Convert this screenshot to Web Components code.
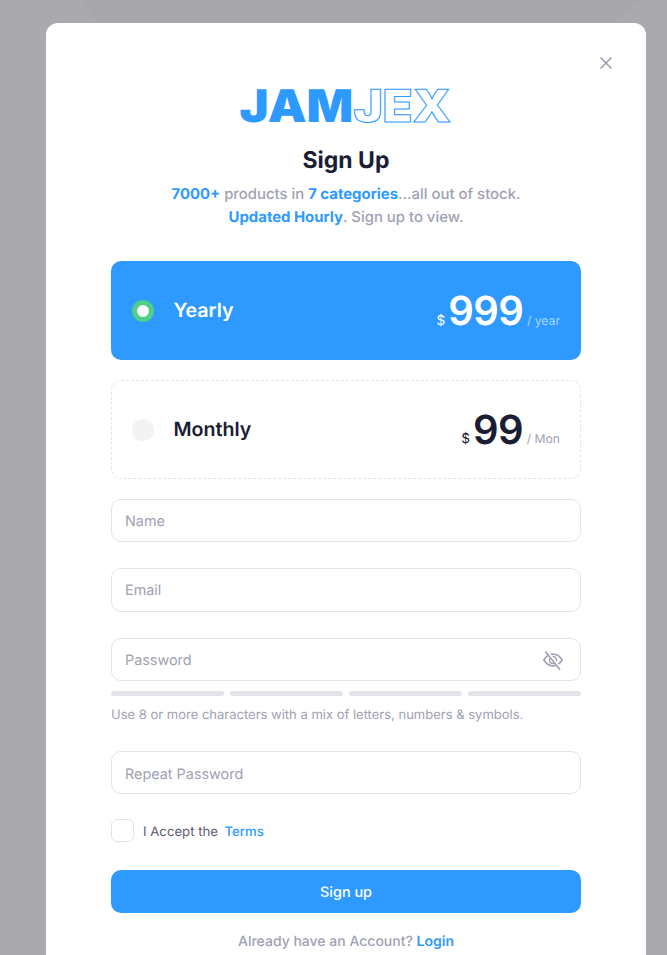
<!DOCTYPE html>
<html lang="en"><head><meta charset="utf-8"><title>Sign Up</title>
<style>
html,body{margin:0;height:955px;overflow:hidden;background:#aaaaae;font-family:Inter,"Liberation Sans",sans-serif;font-optical-sizing:none;text-rendering:geometricPrecision;-webkit-font-smoothing:antialiased}
</style></head><body>
<signup-modal>
  <brand-logo></brand-logo>
  <h1 slot="title">Sign Up</h1>
  <plan-card slot="plans" selected name="Yearly" amount="999" unit="/ year"></plan-card>
  <plan-card slot="plans" name="Monthly" amount="99" unit="/ Mon"></plan-card>
  <text-field slot="f1" placeholder="Name"></text-field>
  <text-field slot="f2" placeholder="Email"></text-field>
  <text-field slot="f3" placeholder="Password" eye></text-field>
  <strength-meter slot="f3m"></strength-meter>
  <text-field slot="f4" placeholder="Repeat Password" style="--dy:4px"></text-field>
  <terms-check slot="terms"></terms-check>
  <primary-button slot="submit">Sign up</primary-button>
</signup-modal>
<script>
const el=(name,html,cls)=>customElements.define(name,cls||class extends HTMLElement{constructor(){super();this.attachShadow({mode:'open'}).innerHTML=html;}});
el('brand-logo',`<style>
:host{display:flex;justify-content:center;height:50px;padding-right:2px}
div{font:900 45px/50px Inter,"Liberation Sans",sans-serif;color:#2e9aff;white-space:nowrap;padding-top:1px;transform:scaleX(1.087)}
span{color:#fff;-webkit-text-stroke:1px #2e9aff}
</style><div>JAM<span>JEX</span></div>`);
el('signup-modal',`<style>
:host{display:block;box-sizing:border-box;padding:23px 21px 0 46px;height:955px;overflow:hidden;position:relative}
.shade{position:absolute;left:82px;top:0;width:560px;height:24px;background:#a7a7ab;clip-path:polygon(0 0,100% 0,94% 100%,3% 100%)}
.modal{position:relative;background:#fff;border-radius:12px;padding:57px 65px 0;height:960px;box-sizing:border-box}
.close{position:absolute;top:33px;right:33px;width:14px;height:14px;display:block}
::slotted(h1){margin:15px 0 0;font:700 23px/30px Inter,sans-serif;color:#1a1d34;text-align:center}
p{margin:8px 0 0;font:500 14.9px/22.5px Inter,sans-serif;color:#a0a1b2;text-align:center}
p b{font-weight:700;color:#2e9aff}
.plans{display:grid;gap:20px;margin-top:33px}
.f{margin-top:26px}
.plans + .f{margin-top:19.75px}
.hint{margin:11.5px 0 0;font:400 13px/17.5px Inter,sans-serif;color:#a0a1b2}
.terms{margin-top:24.75px}
.submit{margin-top:28px}
.login{margin:20px 0 0;font:500 14px/17px Inter,sans-serif;color:#a0a1b2;text-align:center}
.login a{color:#2e9aff;font-weight:600}
</style><div class="shade"></div><div class="modal">
<svg class="close" viewBox="0 0 14 14" fill="none" stroke="#9a9bb0" stroke-width="1.5"><path d="M1.5 1.500l11 11M12.500 1.500l-11 11"/></svg>
<slot></slot><slot name="title"></slot>
<p><b>7000+</b> products in <b>7 categories</b>...all out of stock.<br><b>Updated Hourly</b>. Sign up to view.</p>
<div class="plans"><slot name="plans"></slot></div>
<div class="f"><slot name="f1"></slot></div>
<div class="f"><slot name="f2"></slot></div>
<div class="f"><slot name="f3"></slot><slot name="f3m"></slot><div class="hint">Use 8 or more characters with a mix of letters, numbers &amp; symbols.</div></div>
<div class="f"><slot name="f4"></slot></div>
<div class="terms"><slot name="terms"></slot></div>
<div class="submit"><slot name="submit"></slot></div>
<div class="login">Already have an Account? <a>Login</a></div>
</div>`);
class PlanCard extends HTMLElement{constructor(){super();const s=this.hasAttribute('selected');this.attachShadow({mode:'open'}).innerHTML=`<style>
:host{display:block}
.c{box-sizing:border-box;height:99px;border-radius:10px;display:flex;align-items:center;padding:0 21px 0 21px;
 ${s?'background:#2e9aff;color:#fff':'border:1px dashed #e3e3e8;color:#1a1d34;padding:0 20px 0 20px'}}
.r{width:22px;height:22px;border-radius:50%;box-sizing:border-box;${s?'background:#fff;border:5.5px solid #50cf8c':'background:#f3f3f4'}}
.n{margin:0 0 2px 19.5px;font:600 19.6px/24px Inter,sans-serif;flex:1}
.d{font:400 13.5px/16px Inter,sans-serif;margin-right:3px;align-self:flex-end;margin-bottom:31px}
.a{font:600 40px/48px Inter,sans-serif;letter-spacing:-.5px}
.u{font:400 12.2px/16px Inter,sans-serif;margin-left:3.5px;align-self:flex-end;margin-bottom:31px;color:${s?'#a9d5ff':'#a0a1b2'}}
</style><div class="c"><span class="r"></span><span class="n">${this.getAttribute('name')}</span><span class="d">$</span><span class="a">${this.getAttribute('amount')}</span><span class="u">${this.getAttribute('unit')}</span></div>`;}}
el('plan-card','',PlanCard);
class TextField extends HTMLElement{constructor(){super();this.attachShadow({mode:'open'}).innerHTML=`<style>
:host{display:block}
.i{box-sizing:border-box;height:43.5px;border:1px solid #e3e3ea;border-radius:10px;display:flex;align-items:center;justify-content:space-between;padding:0 16px 0 13px;font:400 14.4px/18px Inter,sans-serif;color:#a0a1b2}
span{padding-top:var(--dy,2px)}
svg{width:22px;height:22px}
</style><div class="i"><span>${this.getAttribute('placeholder')}</span>${this.hasAttribute('eye')?`<svg viewBox="0 0 24 24" fill="none" stroke="#a0a1b2" stroke-width="1.7" stroke-linecap="round" stroke-linejoin="round"><path d="M2 12c2.6-4.2 6-6.4 10-6.4s7.4 2.2 10 6.4c-2.6 4.200-6 6.400-10 6.400S4.600 16.200 2 12z"/><circle cx="12" cy="12" r="3.800"/><path d="M5 2.500l15 19" stroke="#fff" stroke-width="3.200"/><path d="M3.800 3l15.500 19"/></svg>`:''}</div>`;}}
el('text-field','',TextField);
el('strength-meter',`<style>
:host{display:grid;grid-template-columns:repeat(4,1fr);gap:6px;margin-top:9.5px}
i{display:block;height:5px;border-radius:3px;background:#e3e3ea}
</style><i></i><i></i><i></i><i></i>`);
el('terms-check',`<style>
:host{display:flex;align-items:center;height:23px;font:400 13.2px/16px Inter,sans-serif;color:#5d5e72}
i{width:23px;height:23px;box-sizing:border-box;border:1px solid #e3e3ea;border-radius:6px;margin-right:9px}
span,a{padding-top:3px}
a{color:#2e9aff;font-weight:500;margin-left:6.5px}
</style><i></i><span>I Accept the</span><a>Terms</a>`);
el('primary-button',`<style>
:host{display:flex;align-items:center;justify-content:center;height:43px;box-sizing:border-box;padding-top:2px;background:#2e9aff;border-radius:10px;color:#fff;font:500 14.4px/18px Inter,sans-serif}
</style><slot></slot>`);
</script></body></html>
